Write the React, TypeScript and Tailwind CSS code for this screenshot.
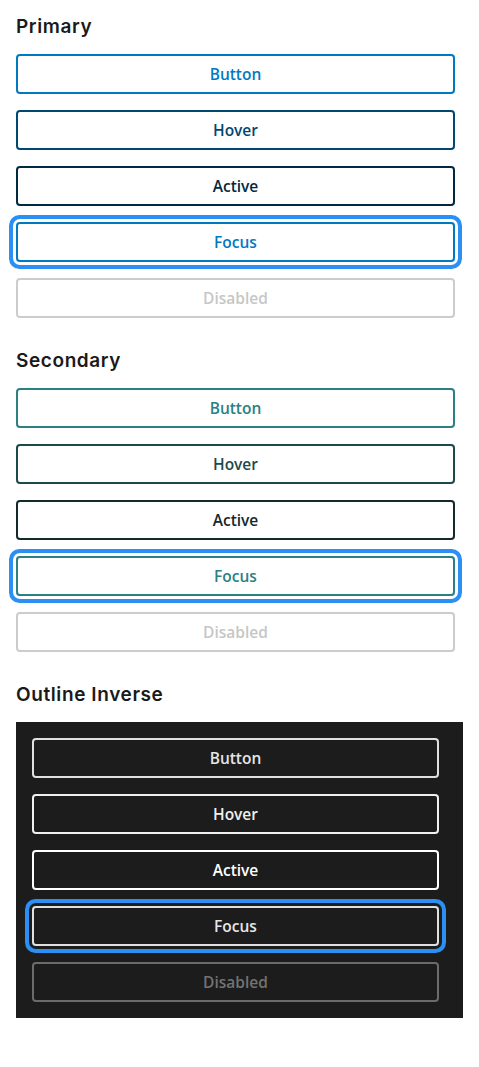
const labels = ["Button", "Hover", "Active", "Focus", "Disabled"];

type Variant = {
  title: string;
  styles: string[];
};

const base =
  "h-10 w-[calc(100%-8px)] rounded border-2 bg-transparent pt-0.5 text-[15.5px] font-semibold flex items-center justify-center";

const primary: Variant = {
  title: "Primary",
  styles: [
    "border-[#0079c1] text-[#0079c1]",
    "border-[#00486f] text-[#00486f]",
    "border-[#002a40] text-[#002a40]",
    "border-[#0079c1] text-[#0079c1] ring-4 ring-[#2b8ff4] ring-offset-[3px] ring-offset-white",
    "border-[#cccccc] text-[#c6c6c6]",
  ],
};

const secondary: Variant = {
  title: "Secondary",
  styles: [
    "border-[#2b8082] text-[#2b8082]",
    "border-[#1c4a4b] text-[#1c4a4b]",
    "border-[#13292b] text-[#13292b]",
    "border-[#2b8082] text-[#2b8082] ring-4 ring-[#2b8ff4] ring-offset-[3px] ring-offset-white",
    "border-[#cccccc] text-[#c6c6c6]",
  ],
};

const inverse = [
  "border-[#e0e0e0] text-[#e6e6e6]",
  "border-[#f0f0f0] text-[#f0f0f0]",
  "border-white text-white",
  "border-[#e0e0e0] text-[#e6e6e6] ring-4 ring-[#2b8ff4] ring-offset-[3px] ring-offset-[#1c1c1c]",
  "border-[#6b6b6b] text-[#737373]",
];

function Heading({ children }: { children: string }) {
  return (
    <h2 className="h-7 leading-7 text-[19px] font-semibold text-[#1a1a1a] font-['Inter',sans-serif] tracking-[0.6px]">
      {children}
    </h2>
  );
}

function ButtonList({ styles }: { styles: string[] }) {
  return (
    <div className="flex flex-col gap-4">
      {labels.map((label, i) => (
        <button key={label} className={`${base} ${styles[i]}`}>
          {label}
        </button>
      ))}
    </div>
  );
}

export default function App() {
  return (
    <div className="min-h-[1067px] bg-white px-4 pt-[13px] font-['Open_Sans',sans-serif]">
      {[primary, secondary].map((v) => (
        <section key={v.title} className="mb-[29px]">
          <Heading>{v.title}</Heading>
          <div className="mt-[13px]">
            <ButtonList styles={v.styles} />
          </div>
        </section>
      ))}
      <section>
        <Heading>Outline Inverse</Heading>
        <div className="mt-[13px] bg-[#1c1c1c] p-4">
          <ButtonList styles={inverse} />
        </div>
      </section>
    </div>
  );
}
